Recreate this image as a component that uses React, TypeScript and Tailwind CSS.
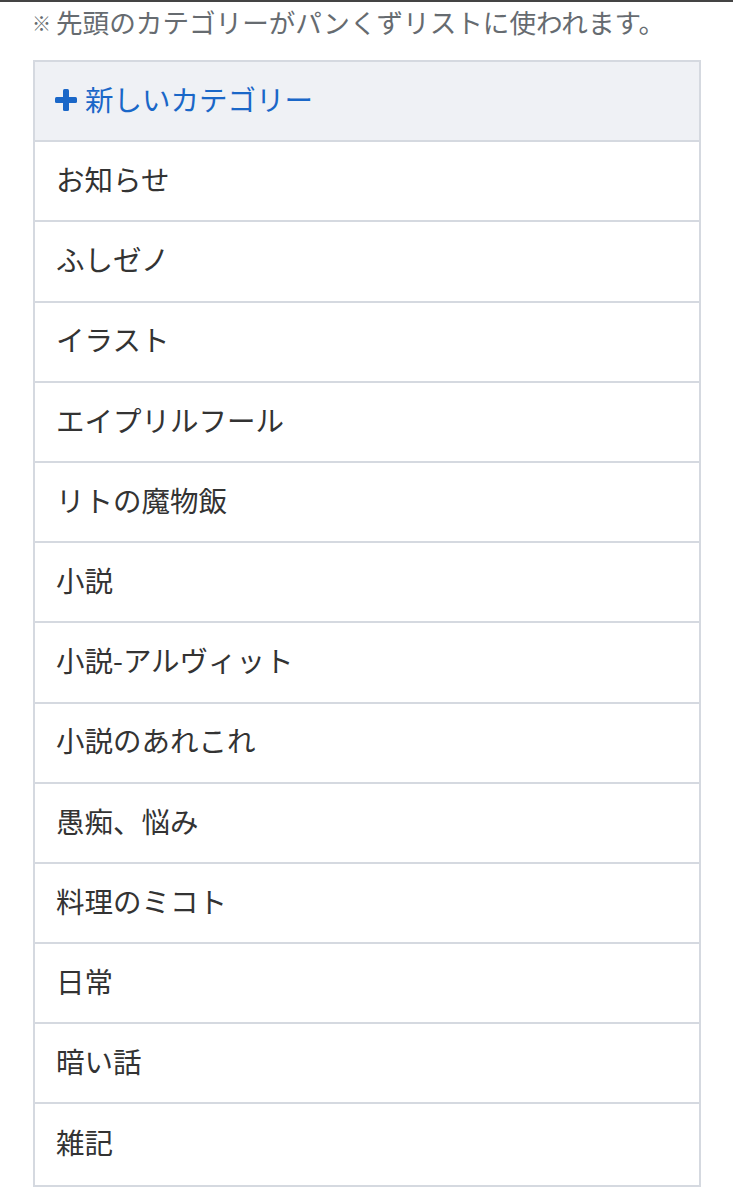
import React from "react";

const items = [
  "お知らせ",
  "ふしゼノ",
  "イラスト",
  "エイプリルフール",
  "リトの魔物飯",
  "小説",
  "小説-アルヴィット",
  "小説のあれこれ",
  "愚痴、悩み",
  "料理のミコト",
  "日常",
  "暗い話",
  "雑記",
];

export default function App() {
  return (
    <div
      className="w-[733px] min-h-[1200px] bg-white"
      style={{ fontFamily: '"Noto Sans CJK JP", "Noto Sans", sans-serif' }}
    >
      <div className="h-[2px] bg-[#444]" />
      <div className="pl-[32px] h-[58px] flex items-start">
        <div className="flex items-center h-[40px] text-[#666b70]">
          <span className="text-[19px] leading-none mr-[5px] mt-[1px]">※</span>
          <span className="text-[26.6px] leading-none">先頭のカテゴリーがパンくずリストに使われます。</span>
        </div>
      </div>
      <div className="ml-[33px] w-[668px] border-2 border-[#d5d9e0]">
        <div className="h-[80.2px] border-b-2 border-[#d5d9e0] bg-[#eff1f5] flex items-center pl-[20px] pb-[3px] text-[#1a67c8]">
          <svg width="22" height="22" viewBox="0 0 22 22" className="mr-[8px]">
            <rect x="8" y="0" width="6" height="22" rx="1.5" fill="#1a67c8" />
            <rect x="0" y="8" width="22" height="6" rx="1.5" fill="#1a67c8" />
          </svg>
          <span className="text-[28.5px] leading-none">新しいカテゴリー</span>
        </div>
        {items.map((t, i) => (
          <div
            key={i}
            className={
              "h-[80.2px] flex items-center pl-[21px] pb-[4px] text-[#333] " +
              (i < items.length - 1 ? "border-b-2 border-[#d5d9e0]" : "")
            }
          >
            <span className="text-[28.5px] leading-none">{t}</span>
          </div>
        ))}
      </div>
    </div>
  );
}
